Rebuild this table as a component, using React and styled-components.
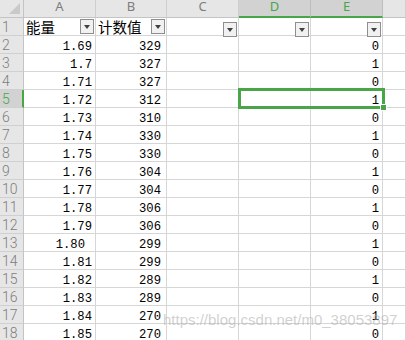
import * as React from 'react'
import styled, {createGlobalStyle} from 'styled-components'

const GREEN = '#48a648'
const GRID = '#d6d6d6'

const rows = [
    ['1.69', '329', '0'],
    ['1.7', '327', '1'],
    ['1.71', '327', '0'],
    ['1.72', '312', '1'],
    ['1.73', '310', '0'],
    ['1.74', '330', '1'],
    ['1.75', '330', '0'],
    ['1.76', '304', '1'],
    ['1.77', '304', '0'],
    ['1.78', '306', '1'],
    ['1.79', '306', '0'],
    ['1.80', '299', '1'],
    ['1.81', '299', '0'],
    ['1.82', '289', '1'],
    ['1.83', '289', '0'],
    ['1.84', '270', '1'],
    ['1.85', '270', '0'],
]

const columns = ['A', 'B', 'C', 'D', 'E', '']
const activeCols = ['D', 'E']
const activeRow = 5

function App() {
    return (
        <>
            <GlobalStyle/>
            <Sheet>
                <Corner><CornerMark/></Corner>
                {columns.map(col => (
                    <ColHead key={col || 'F'} $active={activeCols.includes(col)}>{col}</ColHead>
                ))}

                <RowHead>1</RowHead>
                <Cell><Title>能量</Title><FilterButton/></Cell>
                <Cell><Title>计数值</Title><FilterButton/></Cell>
                <Cell $align="right"><FilterButton/></Cell>
                <Cell $align="right"><FilterButton/></Cell>
                <Cell $align="right"><FilterButton/></Cell>
                <Cell/>

                {rows.map(([a, b, e], i) => {
                    const n = i + 2
                    return (
                        <React.Fragment key={n}>
                            <RowHead $active={n === activeRow}>{n}</RowHead>
                            <Cell $align="right" $pad={a === '1.80' ? 10 : 3}>{a}</Cell>
                            <Cell $align="right" $pad={5}>{b}</Cell>
                            <Cell/>
                            <Cell/>
                            <Cell $align="right" $pad={3}>{e}</Cell>
                            <Cell/>
                        </React.Fragment>
                    )
                })}

                <Selection><FillHandle/></Selection>
                <Watermark>https://blog.csdn.net/m0_38053897</Watermark>
            </Sheet>
        </>
    )
}

export default App

const GlobalStyle = createGlobalStyle`
  html, body {
    margin: 0;
    padding: 0;
    background: #ffffff;
    overflow: hidden;
  }
`

const Sheet = styled.div`
  position: relative;
  display: grid;
  grid-template-columns: 24px 72px 71px 72px 72px 72px 1fr;
  grid-auto-rows: 18px;
  width: 406px;
  height: 340px;
  overflow: hidden;
  background: #ffffff;
`

const Corner = styled.div`
  position: relative;
  box-sizing: border-box;
  background: #e6e6e6;
  border-right: 1px solid #c4c4c4;
  border-bottom: 1px solid #c4c4c4;
`

const CornerMark = styled.div`
  position: absolute;
  right: 3px;
  bottom: 3px;
  width: 0;
  height: 0;
  border-left: 11px solid transparent;
  border-bottom: 11px solid #c9c9c9;
`

const ColHead = styled.div`
  box-sizing: border-box;
  background: ${p => p.$active ? '#d2d2d2' : '#e6e6e6'};
  border-right: 1px solid ${p => p.$active ? '#bdbdbd' : '#cfcfcf'};
  border-bottom: ${p => p.$active ? `2px solid ${GREEN}` : '1px solid #c4c4c4'};
  color: ${p => p.$active ? GREEN : '#7d7d7d'};
  font-family: 'Noto Sans', 'Liberation Sans', sans-serif;
  font-size: 13px;
  line-height: 13px;
  text-align: center;
`

const RowHead = styled.div`
  box-sizing: border-box;
  background: ${p => p.$active ? '#d2d2d2' : '#e6e6e6'};
  border-bottom: 1px solid #d0d0d0;
  border-right: ${p => p.$active ? `2px solid ${GREEN}` : '1px solid #c4c4c4'};
  color: ${p => p.$active ? GREEN : '#7d7d7d'};
  font-family: Roboto, 'Noto Sans', sans-serif;
  font-weight: 300;
  font-size: 14px;
  line-height: 17px;
  padding-left: 2px;
  padding-top: 1px;
`

const Cell = styled.div`
  box-sizing: border-box;
  display: flex;
  align-items: center;
  justify-content: ${p => p.$align === 'right' ? 'flex-end' : 'flex-start'};
  border-right: 1px solid ${GRID};
  border-bottom: 1px solid ${GRID};
  padding-right: ${p => p.$pad ?? 1}px;
  padding-left: 2px;
  color: #000000;
  font-family: 'Liberation Mono', monospace;
  font-size: 12.2px;
  line-height: 17px;
  padding-top: 5px;
  white-space: nowrap;

  &:has(> span) {
    padding-top: 0;
    padding-right: 1px;
    justify-content: space-between;
  }
`

const Title = styled.span`
  font-family: 'Noto Sans CJK SC', sans-serif;
  font-size: 14.5px;
  line-height: 17px;
  color: #000000;
`

const FilterButton = styled.div`
  position: relative;
  box-sizing: border-box;
  flex: none;
  width: 14px;
  height: 15px;
  border: 1px solid #8e8e8e;
  background: #f1f1f1;

  &::after {
    content: '';
    position: absolute;
    left: 3px;
    top: 5px;
    border-left: 3.5px solid transparent;
    border-right: 3.5px solid transparent;
    border-top: 4px solid #404040;
  }
`

const Selection = styled.div`
  position: absolute;
  left: 238px;
  top: 88px;
  width: 147px;
  height: 21px;
  box-sizing: border-box;
  border: 3px solid ${GREEN};
  pointer-events: none;
`

const FillHandle = styled.div`
  position: absolute;
  right: -5px;
  bottom: -5px;
  width: 5px;
  height: 5px;
  background: ${GREEN};
  border: 1px solid #ffffff;
`

const Watermark = styled.div`
  position: absolute;
  left: 163px;
  top: 311px;
  color: rgba(170, 170, 170, 0.55);
  font-family: 'Liberation Sans', Arial, sans-serif;
  font-size: 15px;
  line-height: 17px;
  white-space: nowrap;
  pointer-events: none;
`
